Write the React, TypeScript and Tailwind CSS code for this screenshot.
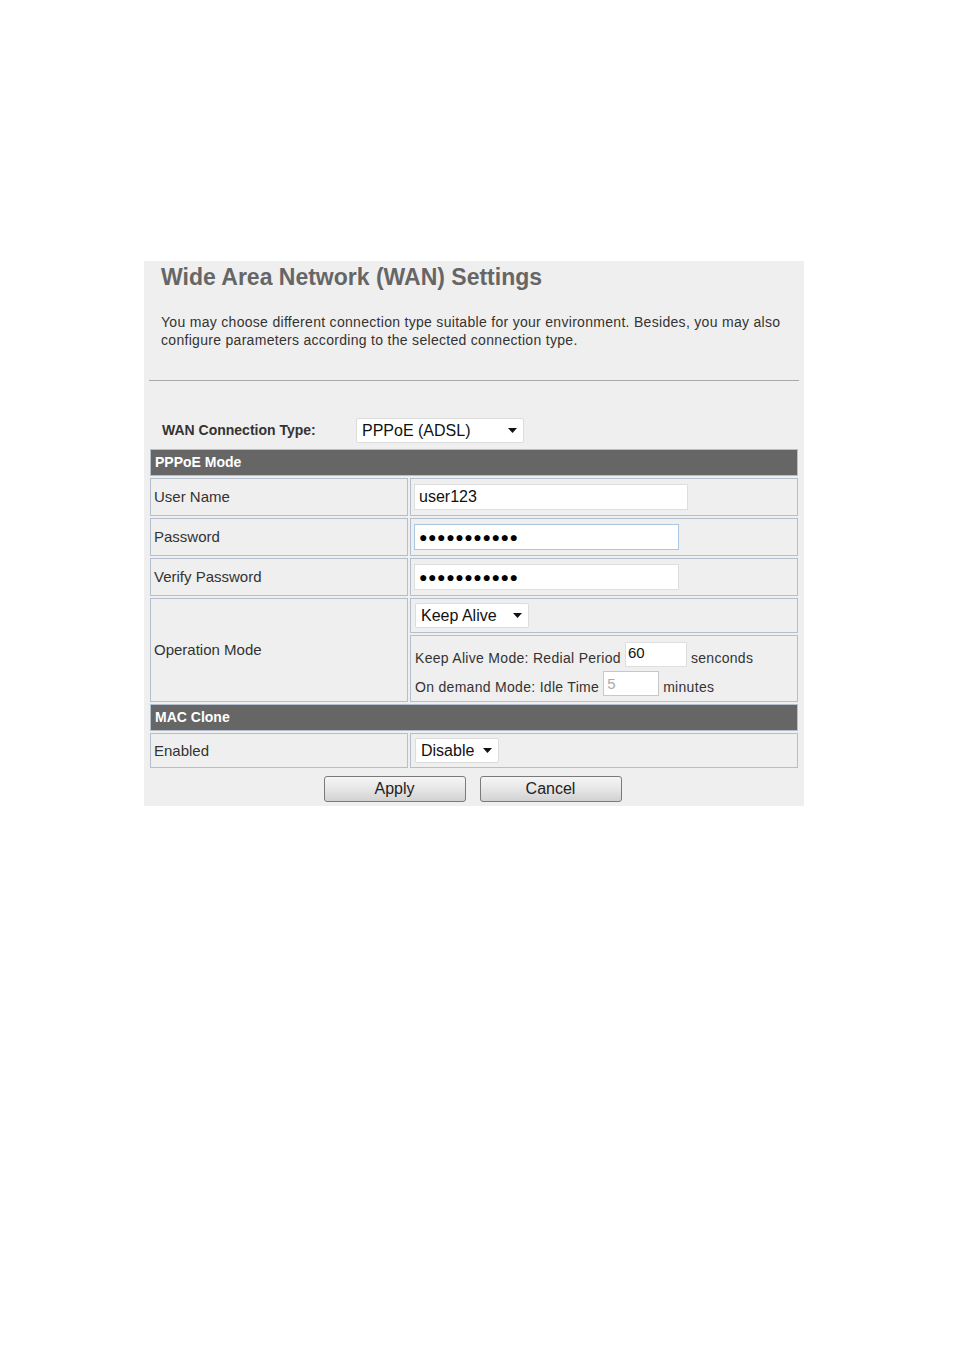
import React from 'react';

const font = { fontFamily: '"Liberation Sans", Arial, sans-serif' };

const Caret = () => (
  <svg width="9" height="5" viewBox="0 0 9 5" className="shrink-0">
    <path d="M0 0h9L4.5 5z" fill="#111" />
  </svg>
);

type SelectBoxProps = { value: string; width: string };

const SelectBox: React.FC<SelectBoxProps> = ({ value, width }) => (
  <div
    className={`flex h-[25px] items-center justify-between rounded-[2px] border border-[#dcdcdc] bg-white pl-[5px] pr-[6px] text-[16px] text-[#111] ${width}`}
  >
    <span>{value}</span>
    <Caret />
  </div>
);

const cell = 'border border-[#b3bfcc] bg-[#efefef] p-0 align-middle';
const label = 'pl-[3px] text-[15px] text-[#333]';

const Dots = () => (
  <span className="text-[14px] leading-none tracking-[0.6px] text-black">●●●●●●●●●●●</span>
);

const SectionHead: React.FC<{ title: string }> = ({ title }) => (
  <tr>
    <td
      colSpan={2}
      className="h-[27px] border border-[#b3bfcc] bg-[#666666] pl-[4px] text-[14px] font-bold text-white"
    >
      {title}
    </td>
  </tr>
);

const Button: React.FC<{ text: string }> = ({ text }) => (
  <button className="h-[26px] w-[142px] rounded-[3px] border border-[#7a7a7a] bg-gradient-to-b from-[#f6f6f6] via-[#e6e6e6] to-[#d2d2d2] text-[16px] text-[#222]">
    {text}
  </button>
);

export default function App() {
  return (
    <div className="min-h-[1350px] w-full bg-white pt-[261px]" style={font}>
      <div className="ml-[144px] flex h-[545px] w-[660px] flex-col bg-[#efefef]">
        <h1 className="mt-[3px] pl-[17px] text-[23px] font-bold leading-[26px] text-[#666666]">
          Wide Area Network (WAN) Settings
        </h1>
        <p className="mt-[23px] pl-[17px] pr-[10px] text-[14px] leading-[18px] tracking-[0.3px] text-[#333]">
          You may choose different connection type suitable for your environment. Besides, you may also
          configure parameters according to the selected connection type.
        </p>
        <div className="mx-[5px] mt-[31px] h-px bg-[#a8a8a8]" />
        <div className="mt-[37px] flex items-center">
          <span className="w-[212px] pl-[18px] text-[14px] font-bold text-[#333]">WAN Connection Type:</span>
          <SelectBox value="PPPoE (ADSL)" width="w-[168px]" />
        </div>
        <table className="mx-[4px] mt-[4px] w-[652px] table-fixed border-separate border-spacing-[2px]">
          <colgroup>
            <col className="w-[258px]" />
            <col />
          </colgroup>
          <tbody>
            <SectionHead title="PPPoE Mode" />
            <tr>
              <td className={`${cell} h-[38px]`}>
                <span className={label}>User Name</span>
              </td>
              <td className={cell}>
                <div className="ml-[3px] flex h-[26px] w-[274px] items-center border border-[#dedede] bg-white pl-[4px] text-[16px] text-[#111]">
                  user123
                </div>
              </td>
            </tr>
            <tr>
              <td className={`${cell} h-[38px]`}>
                <span className={label}>Password</span>
              </td>
              <td className={cell}>
                <div className="ml-[3px] flex h-[26px] w-[265px] items-center border border-[#a9c7e0] bg-white pl-[4px]">
                  <Dots />
                </div>
              </td>
            </tr>
            <tr>
              <td className={`${cell} h-[38px]`}>
                <span className={label}>Verify Password</span>
              </td>
              <td className={cell}>
                <div className="ml-[3px] flex h-[26px] w-[265px] items-center border border-[#dedede] bg-white pl-[4px]">
                  <Dots />
                </div>
              </td>
            </tr>
            <tr>
              <td className={cell} rowSpan={2}>
                <span className={label}>Operation Mode</span>
              </td>
              <td className={`${cell} h-[35px]`}>
                <div className="ml-[4px]">
                  <SelectBox value="Keep Alive" width="w-[114px]" />
                </div>
              </td>
            </tr>
            <tr>
              <td className={`${cell} h-[67px] !align-top`}>
                <div className="flex flex-col gap-[4px] pl-[4px] pt-[6px] text-[14px] tracking-[0.3px] text-[#333]">
                  <div className="flex items-end gap-[4px]">
                    <span className="leading-[18px]">Keep Alive Mode: Redial Period</span>
                    <div className="flex h-[25px] w-[62px] items-start border border-[#dedede] bg-white pl-[2px] pt-[2px] text-[15px] leading-none tracking-normal text-[#111]">
                      60
                    </div>
                    <span className="leading-[18px]">senconds</span>
                  </div>
                  <div className="flex items-end gap-[4px]">
                    <span className="leading-[18px]">On demand Mode: Idle Time</span>
                    <div className="flex h-[25px] w-[56px] items-start border border-[#c8c8c8] bg-white pl-[3px] pt-[4px] text-[15px] leading-none tracking-normal text-[#aaa]">
                      5
                    </div>
                    <span className="leading-[18px]">minutes</span>
                  </div>
                </div>
              </td>
            </tr>
            <SectionHead title="MAC Clone" />
            <tr>
              <td className={`${cell} h-[35px]`}>
                <span className={label}>Enabled</span>
              </td>
              <td className={cell}>
                <div className="ml-[4px]">
                  <SelectBox value="Disable" width="w-[84px]" />
                </div>
              </td>
            </tr>
          </tbody>
        </table>
        <div className="mt-[6px] flex justify-center gap-[14px] pr-[3px]">
          <Button text="Apply" />
          <Button text="Cancel" />
        </div>
      </div>
    </div>
  );
}
